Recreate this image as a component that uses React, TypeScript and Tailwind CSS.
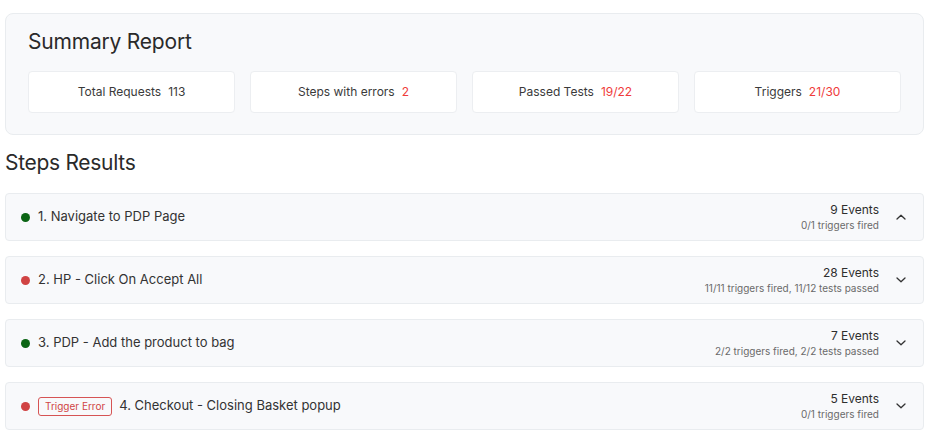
import React from "react";

type Step = {
  n: string;
  ok: boolean;
  badge?: string;
  events: string;
  sub: string;
  open?: boolean;
};

const steps: Step[] = [
  { n: "1. Navigate to PDP Page", ok: true, events: "9 Events", sub: "0/1 triggers fired", open: true },
  { n: "2. HP - Click On Accept All", ok: false, events: "28 Events", sub: "11/11 triggers fired, 11/12 tests passed" },
  { n: "3. PDP - Add the product to bag", ok: true, events: "7 Events", sub: "2/2 triggers fired, 2/2 tests passed" },
  { n: "4. Checkout - Closing Basket popup", ok: false, badge: "Trigger Error", events: "5 Events", sub: "0/1 triggers fired" },
];

const stats = [
  { label: "Total Requests", value: "113", red: false },
  { label: "Steps with errors", value: "2", red: true },
  { label: "Passed Tests", value: "19/22", red: true },
  { label: "Triggers", value: "21/30", red: true },
];

function Chevron({ up }: { up?: boolean }) {
  return (
    <svg width="10" height="6" viewBox="0 0 10 6" fill="none" className="shrink-0">
      {up ? (
        <path d="M1 5L5 1.2L9 5" stroke="#333" strokeWidth="1.3" strokeLinecap="round" strokeLinejoin="round" />
      ) : (
        <path d="M1 1L5 4.8L9 1" stroke="#333" strokeWidth="1.3" strokeLinecap="round" strokeLinejoin="round" />
      )}
    </svg>
  );
}

export default function App() {
  return (
    <div className="w-[929px] h-[441px] bg-white px-[5px] pt-[13px] text-[#2b2b2b] font-['Inter',sans-serif] overflow-hidden">
      <div className="rounded-[8px] border border-[#e9ecef] bg-[#f8f9fb] px-[22px] pt-[14px] pb-[21px]">
        <h1 className="text-[21px] leading-[28px] text-[#2a2a2a] font-normal tracking-[-0.2px]">Summary Report</h1>
        <div className="mt-[15px] grid grid-cols-4 gap-[15px]">
          {stats.map((s) => (
            <div
              key={s.label}
              className="h-[42px] rounded-[4px] border border-[#eceef1] bg-white flex items-center justify-center gap-[7px] text-[12px]"
            >
              <span className="text-[#3a3a3a]">{s.label}</span>
              <span className={s.red ? "text-[#ef3b3b]" : "text-[#3a3a3a]"}>{s.value}</span>
            </div>
          ))}
        </div>
      </div>

      <h2 className="mt-[14px] text-[21px] leading-[28px] text-[#2a2a2a] font-normal tracking-[-0.3px]">Steps Results</h2>

      <div className="mt-[16px] flex flex-col gap-[15px]">
        {steps.map((s) => (
          <div
            key={s.n}
            className="h-[48px] rounded-[4px] border border-[#e9ecef] bg-[#f8f9fb] flex items-center pl-[15px] pr-[17px]"
          >
            <span className={`w-[9px] h-[9px] rounded-full shrink-0 ${s.ok ? "bg-[#0b6514]" : "bg-[#d04343]"}`} />
            {s.badge && (
              <span className="ml-[8px] h-[19px] px-[6px] flex items-center rounded-[3px] border border-[#d65454] text-[10px] text-[#d04545]">
                {s.badge}
              </span>
            )}
            <span className={`${s.badge ? "ml-[7px]" : "ml-[8px]"} text-[13px] text-[#333]`}>{s.n}</span>
            <div className="ml-auto flex flex-col items-end leading-none">
              <span className="text-[12px] text-[#2e2e2e]">{s.events}</span>
              <span className="mt-[4px] text-[10px] text-[#6a6a6a]">{s.sub}</span>
            </div>
            <div className="ml-[17px] w-[10px] flex justify-center">
              <Chevron up={s.open} />
            </div>
          </div>
        ))}
      </div>
    </div>
  );
}
